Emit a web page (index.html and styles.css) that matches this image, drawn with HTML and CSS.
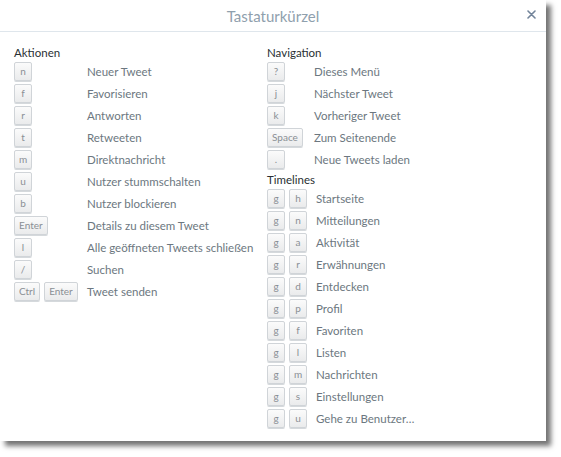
FILE: index.html
```html
<!DOCTYPE html>
<html lang="de">
<head>
<meta charset="utf-8">
<title>Tastaturkürzel</title>
<link rel="stylesheet" href="styles.css">
</head>
<body>
<div class="dialog">
  <div class="header">
    <div class="title">Tastaturkürzel</div>
    <svg class="close" width="9" height="9" viewBox="0 0 9 9" aria-label="Schließen"><path d="M1 1 L8 8 M8 1 L1 8" stroke="#72849a" stroke-width="1.6" stroke-linecap="round" fill="none"/></svg>
  </div>
  <div class="body">
    <div class="col col-left">
      <div class="heading">Aktionen</div>
      <div class="row"><span class="keys"><span class="key">n</span></span><span class="desc">Neuer Tweet</span></div>
      <div class="row"><span class="keys"><span class="key">f</span></span><span class="desc">Favorisieren</span></div>
      <div class="row"><span class="keys"><span class="key">r</span></span><span class="desc">Antworten</span></div>
      <div class="row"><span class="keys"><span class="key">t</span></span><span class="desc">Retweeten</span></div>
      <div class="row"><span class="keys"><span class="key">m</span></span><span class="desc">Direktnachricht</span></div>
      <div class="row"><span class="keys"><span class="key">u</span></span><span class="desc">Nutzer stummschalten</span></div>
      <div class="row"><span class="keys"><span class="key">b</span></span><span class="desc">Nutzer blockieren</span></div>
      <div class="row"><span class="keys"><span class="key wide">Enter</span></span><span class="desc">Details zu diesem Tweet</span></div>
      <div class="row"><span class="keys"><span class="key">l</span></span><span class="desc">Alle geöffneten Tweets schließen</span></div>
      <div class="row"><span class="keys"><span class="key">/</span></span><span class="desc">Suchen</span></div>
      <div class="row"><span class="keys"><span class="key wide">Ctrl</span><span class="key wide">Enter</span></span><span class="desc">Tweet senden</span></div>
    </div>
    <div class="col col-right">
      <div class="heading">Navigation</div>
      <div class="row"><span class="keys nav"><span class="key">?</span></span><span class="desc">Dieses Menü</span></div>
      <div class="row"><span class="keys nav"><span class="key">j</span></span><span class="desc">Nächster Tweet</span></div>
      <div class="row"><span class="keys nav"><span class="key">k</span></span><span class="desc">Vorheriger Tweet</span></div>
      <div class="row"><span class="keys nav"><span class="key wide">Space</span></span><span class="desc">Zum Seitenende</span></div>
      <div class="row"><span class="keys nav"><span class="key">.</span></span><span class="desc">Neue Tweets laden</span></div>
      <div class="heading heading-sub">Timelines</div>
      <div class="row"><span class="keys tl"><span class="key">g</span><span class="key">h</span></span><span class="desc">Startseite</span></div>
      <div class="row"><span class="keys tl"><span class="key">g</span><span class="key">n</span></span><span class="desc">Mitteilungen</span></div>
      <div class="row"><span class="keys tl"><span class="key">g</span><span class="key">a</span></span><span class="desc">Aktivität</span></div>
      <div class="row"><span class="keys tl"><span class="key">g</span><span class="key">r</span></span><span class="desc">Erwähnungen</span></div>
      <div class="row"><span class="keys tl"><span class="key">g</span><span class="key">d</span></span><span class="desc">Entdecken</span></div>
      <div class="row"><span class="keys tl"><span class="key">g</span><span class="key">p</span></span><span class="desc">Profil</span></div>
      <div class="row"><span class="keys tl"><span class="key">g</span><span class="key">f</span></span><span class="desc">Favoriten</span></div>
      <div class="row"><span class="keys tl"><span class="key">g</span><span class="key">l</span></span><span class="desc">Listen</span></div>
      <div class="row"><span class="keys tl"><span class="key">g</span><span class="key">m</span></span><span class="desc">Nachrichten</span></div>
      <div class="row"><span class="keys tl"><span class="key">g</span><span class="key">s</span></span><span class="desc">Einstellungen</span></div>
      <div class="row"><span class="keys tl"><span class="key">g</span><span class="key">u</span></span><span class="desc">Gehe zu Benutzer…</span></div>
    </div>
  </div>
</div>
</body>
</html>
```
FILE: styles.css
```css
html, body {
  margin: 0;
  padding: 0;
  background: #ffffff;
}
body {
  font-family: Lato, "Liberation Sans", sans-serif;
  width: 561px;
  height: 457px;
  overflow: hidden;
}
.dialog {
  width: 546px;
  height: 441px;
  background: #ffffff;
  box-shadow: 5px 5px 5px rgba(0, 0, 0, 0.55);
  box-sizing: border-box;
}
.header {
  height: 31px;
  border-bottom: 1px solid #dfe6ec;
  display: flex;
  align-items: center;
  justify-content: center;
  position: relative;
}
.title {
  font-size: 15px;
  color: #8fa0ad;
  line-height: 20px;
  margin-top: 1px;
}
.close {
  position: absolute;
  right: 10px;
  top: 10px;
}
.body {
  display: flex;
  padding: 13px 0 0 14px;
}
.col-left {
  width: 253px;
}
.heading {
  font-size: 11.5px;
  line-height: 16px;
  height: 16px;
  color: #292f33;
  margin-bottom: 1px;
}
.row {
  display: flex;
  align-items: center;
  height: 22px;
}
.keys {
  display: flex;
  gap: 4px;
  width: 73px;
  flex: none;
  align-self: flex-start;
}
.keys.nav {
  width: 47px;
}
.keys.tl {
  width: 49px;
}
.key {
  box-sizing: border-box;
  min-width: 18px;
  height: 19px;
  padding: 0 4px;
  border: 1px solid #d0d4d8;
  border-radius: 2px;
  background: linear-gradient(#fbfbfb, #eaebec);
  box-shadow: 0 1px 0 #d5d9dc;
  color: #8a8f94;
  font-size: 10px;
  line-height: 17px;
  text-align: center;
}
.key.wide {
  padding: 0 4px;
}
.desc {
  font-size: 11.5px;
  color: #6c7780;
  white-space: nowrap;
  margin-top: -3px;
}
```
